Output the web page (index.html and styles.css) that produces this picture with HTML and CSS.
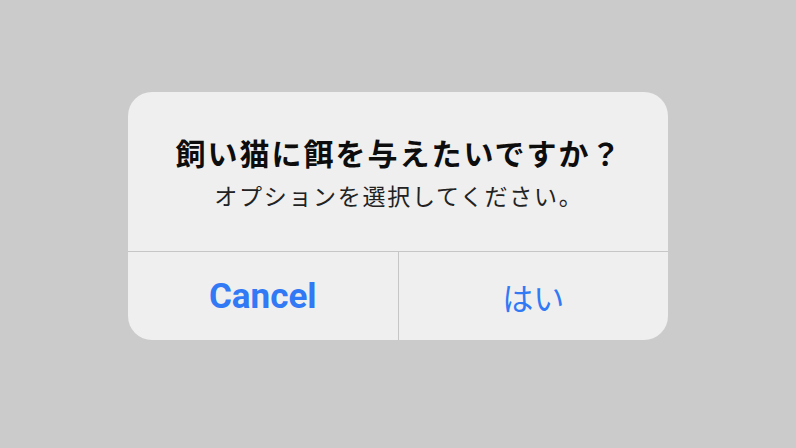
FILE: index.html
```html
<!DOCTYPE html>
<html lang="ja">
<head>
<meta charset="utf-8">
<title>アラート</title>
<link rel="stylesheet" href="styles.css">
</head>
<body>
  <div class="alert" role="alertdialog">
    <div class="alert-body">
      <h1 class="alert-title">飼い猫に餌を与えたいですか？</h1>
      <p class="alert-message">オプションを選択してください。</p>
    </div>
    <div class="alert-actions">
      <button class="alert-button alert-button-cancel">Cancel</button>
      <button class="alert-button">はい</button>
    </div>
  </div>
</body>
</html>
```
FILE: styles.css
```css
html, body {
  margin: 0;
  height: 100%;
}

body {
  background: #cbcbcb;
  display: flex;
  justify-content: center;
  align-items: flex-start;
  padding-top: 92px;
  box-sizing: border-box;
  font-family: "Noto Sans CJK JP", "Noto Sans", sans-serif;
}

.alert {
  width: 540px;
  height: 248px;
  background: #efefef;
  border-radius: 24px;
  display: flex;
  flex-direction: column;
  overflow: hidden;
}

.alert-body {
  height: 160px;
  box-sizing: border-box;
  padding-top: 40px;
  border-bottom: 1px solid #c6c6c6;
  text-align: center;
}

.alert-title {
  margin: 0;
  font-size: 30px;
  line-height: 40px;
  font-weight: 700;
  color: #0d0d0d;
  letter-spacing: 2px;
  text-indent: 2px;
}

.alert-message {
  margin: 8px 0 0;
  font-size: 23px;
  line-height: 30px;
  font-weight: 400;
  color: #222;
  letter-spacing: 1.7px;
  text-indent: 1.7px;
}

.alert-actions {
  flex: 1;
  display: flex;
}

.alert-button {
  flex: 1;
  border: 0;
  margin: 0;
  padding: 0;
  background: transparent;
  color: #3179f5;
  font-family: "Noto Sans CJK JP", sans-serif;
  font-size: 31px;
  font-weight: 400;
}

.alert-button + .alert-button {
  border-left: 1px solid #c6c6c6;
}

.alert-button-cancel {
  font-family: Roboto, "Liberation Sans", sans-serif;
  font-size: 35px;
  font-weight: 700;
}
```
